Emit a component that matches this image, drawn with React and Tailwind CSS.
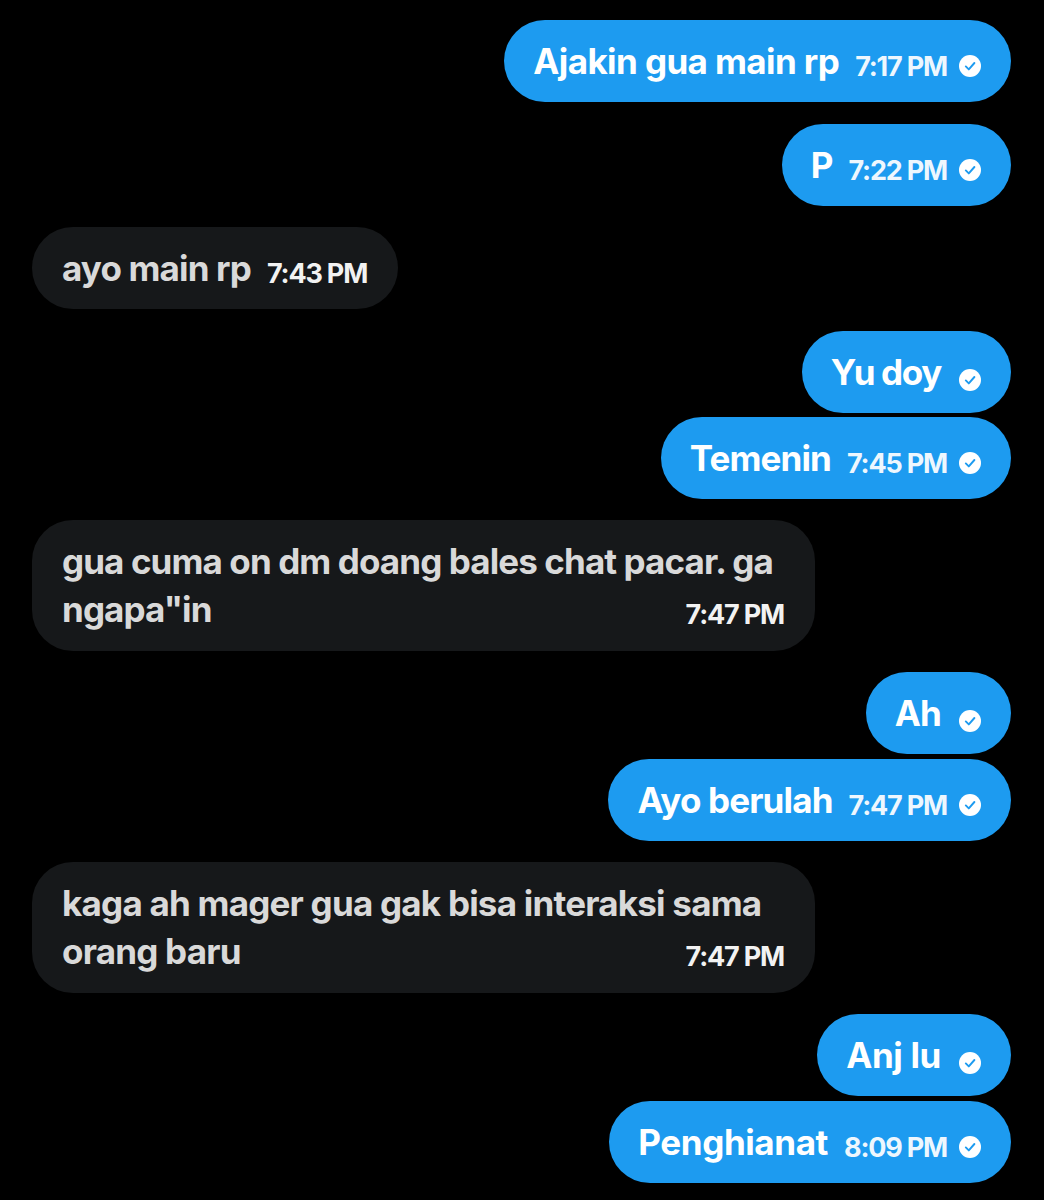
const FONT = "font-['Inter','Liberation_Sans',sans-serif]";

const messages = [
  { id: 1, mine: true, text: "Ajakin gua main rp", time: "7:17 PM", mt: "mt-0", track: "tracking-[-0.6px]" },
  { id: 2, mine: true, text: "P", time: "7:22 PM", mt: "mt-[22px]" },
  { id: 3, mine: false, text: "ayo main rp", time: "7:43 PM", mt: "mt-[21px]" },
  { id: 4, mine: true, text: "Yu doy", mt: "mt-[22px]", track: "tracking-[-1.35px]" },
  { id: 5, mine: true, text: "Temenin", time: "7:45 PM", mt: "mt-1" },
  {
    id: 6,
    mine: false,
    lines: ["gua cuma on dm doang bales chat pacar. ga", "ngapa\"in"],
    time: "7:47 PM",
    mt: "mt-[21px]",
    track: "tracking-[-0.9px]",
  },
  { id: 7, mine: true, text: "Ah", mt: "mt-[21px]" },
  { id: 8, mine: true, text: "Ayo berulah", time: "7:47 PM", mt: "mt-[5px]" },
  {
    id: 9,
    mine: false,
    lines: ["kaga ah mager gua gak bisa interaksi sama", "orang baru"],
    time: "7:47 PM",
    mt: "mt-[21px]",
    track: "tracking-[-0.78px]",
  },
  { id: 10, mine: true, text: "Anj lu", mt: "mt-[21px]", track: "tracking-[-0.35px]" },
  { id: 11, mine: true, text: "Penghianat", time: "8:09 PM", mt: "mt-[5px]", track: "tracking-[-0.4px]" },
];

const ReadCheck = ({ low }) => (
  <svg
    viewBox="0 0 22 22"
    className={`h-[22px] w-[22px] shrink-0 ${low ? "mt-[21px] ml-[18px]" : "mt-[18px] ml-[12px]"}`}
  >
    <circle cx="11" cy="11" r="11" fill="#ffffff" />
    <path
      d="M6.8 11.4l3 3 5.6-6.4"
      fill="none"
      stroke="#1d9bf0"
      strokeWidth="1.9"
      strokeLinecap="round"
      strokeLinejoin="round"
    />
  </svg>
);

const Time = ({ children, color }) => (
  <span className={`text-[27px] leading-[34px] font-bold tracking-[-1.2px] whitespace-nowrap ${color}`}>
    {children}
  </span>
);

const Bubble = ({ msg }) => {
  const track = msg.track || "tracking-[-0.85px]";

  if (msg.lines) {
    return (
      <div className={`${msg.mt} flex justify-start`}>
        <div className="h-[131px] w-[783px] rounded-[41px] bg-[#16181a] pt-[17px] pl-[30px] pr-[31px]">
          <div className={`h-[48px] text-[35px] leading-[48px] font-bold whitespace-nowrap text-[#d9d9d9] ${track}`}>
            {msg.lines[0]}
          </div>
          <div className="flex h-[48px] items-start justify-between">
            <span className={`text-[35px] leading-[48px] font-bold whitespace-nowrap text-[#d9d9d9] ${track}`}>
              {msg.lines[1]}
            </span>
            <span className="pt-[13px]">
              <Time color="text-[#f2f2f2]">{msg.time}</Time>
            </span>
          </div>
        </div>
      </div>
    );
  }

  return (
    <div className={`${msg.mt} flex ${msg.mine ? "justify-end" : "justify-start"}`}>
      <div
        className={`flex h-[82px] items-start rounded-[41px] pt-[17px] ${
          msg.mine ? "bg-[#1d9bf0] pl-[29px] pr-[30px]" : "bg-[#16181a] pl-[30px] pr-[31px]"
        }`}
      >
        <span
          className={`text-[35px] leading-[48px] font-bold whitespace-nowrap ${track} ${
            msg.mine ? "text-white" : "text-[#d9d9d9]"
          }`}
        >
          {msg.text}
        </span>
        {msg.time && (
          <span className="ml-[16px] pt-[13px]">
            <Time color={msg.mine ? "text-[#eef7fe]" : "text-[#f2f2f2]"}>{msg.time}</Time>
          </span>
        )}
        {msg.mine && <ReadCheck low={!msg.time} />}
      </div>
    </div>
  );
};

export default function App() {
  return (
    <div className={`${FONT} h-[1200px] w-[1044px] overflow-hidden bg-black pt-5 pl-8 pr-[33px]`}>
      {messages.map((msg) => (
        <Bubble key={msg.id} msg={msg} />
      ))}
    </div>
  );
}
